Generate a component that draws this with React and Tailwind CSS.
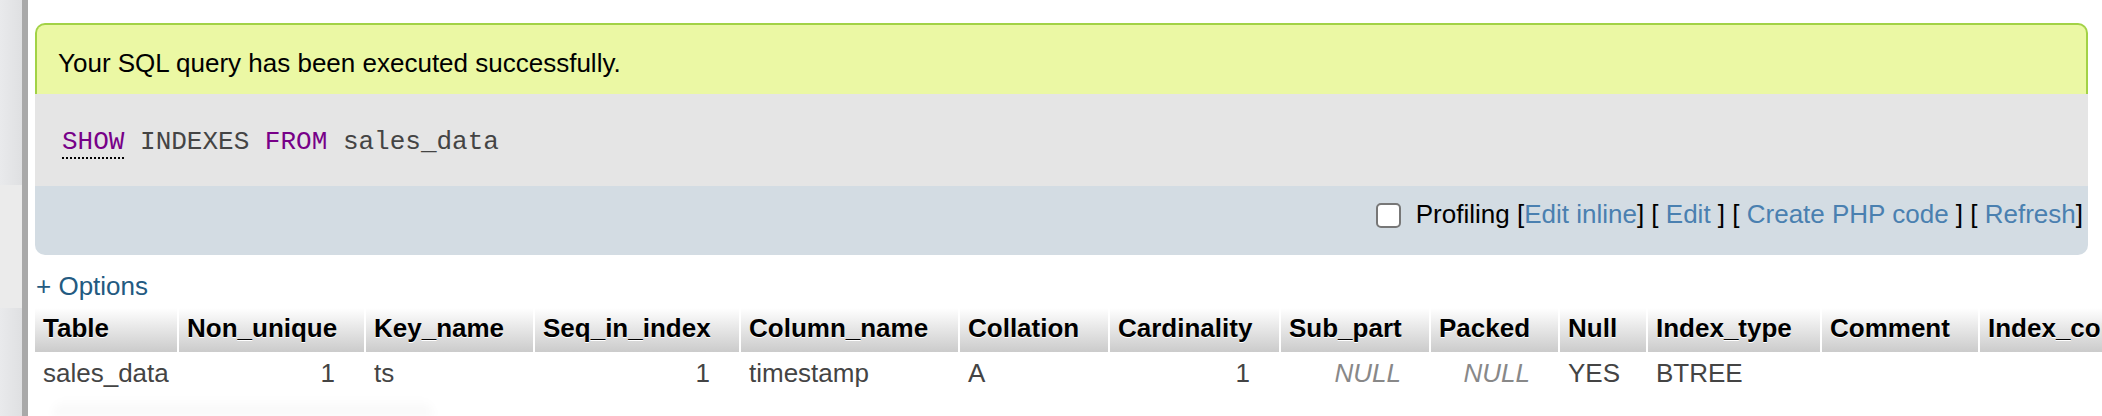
import React from "react";

const cols = [
  { name: "Table", w: "w-[144px]" },
  { name: "Non_unique", w: "w-[187px]" },
  { name: "Key_name", w: "w-[169px]" },
  { name: "Seq_in_index", w: "w-[206px]" },
  { name: "Column_name", w: "w-[219px]" },
  { name: "Collation", w: "w-[150px]" },
  { name: "Cardinality", w: "w-[171px]" },
  { name: "Sub_part", w: "w-[150px]" },
  { name: "Packed", w: "w-[129px]" },
  { name: "Null", w: "w-[88px]" },
  { name: "Index_type", w: "w-[174px]" },
  { name: "Comment", w: "w-[158px]" },
  { name: "Index_comment", w: "w-[240px]" },
];

const row = [
  { v: "sales_data", t: "l" },
  { v: "1", t: "r" },
  { v: "ts", t: "l" },
  { v: "1", t: "r" },
  { v: "timestamp", t: "l" },
  { v: "A", t: "l" },
  { v: "1", t: "r" },
  { v: "NULL", t: "n" },
  { v: "NULL", t: "n" },
  { v: "YES", t: "l" },
  { v: "BTREE", t: "l" },
  { v: "", t: "l" },
  { v: "", t: "l" },
];

function Link({ children }) {
  return <a className="text-[#4a80b0] no-underline">{children}</a>;
}

export default function App() {
  return (
    <div className="flex w-[2102px] h-[416px] overflow-hidden bg-white font-['Liberation_Sans',Arial,sans-serif] text-[26px] leading-[30px] text-black">
      {/* left navigation edge */}
      <div className="flex w-[28px] shrink-0">
        <div className="flex w-[22px] flex-col">
          <div className="h-[185px] bg-[linear-gradient(90deg,#e9eaec,#dfe0e2)]" />
          <div className="h-[123px] bg-[#ebebeb]" />
          <div className="flex-1 bg-[linear-gradient(90deg,#e9eaec,#dfe0e2)]" />
        </div>
        <div className="w-[6px] bg-[#a9a9a9]" />
      </div>

      <div className="relative flex-1 min-w-0 pl-[7px] pt-[23px]">
        <div className="w-[2053px]">
          <div className="rounded-t-[10px] border-2 border-b-0 border-[#a2d246] bg-[#ebf8a4] pl-[21px] pt-[23px] pb-[16px]">
            Your SQL query has been executed successfully.
          </div>
          <div className="bg-[#e5e5e5] pl-[27px] pt-[33px] pb-[29px] font-['Courier_New','Liberation_Mono',monospace] text-[#444] whitespace-pre">
            <span className="text-[#770088] border-b-2 border-dotted border-black">SHOW</span>
            {" INDEXES "}
            <span className="text-[#770088]">FROM</span>
            {" sales_data"}
          </div>
          <div className="flex items-center justify-end rounded-b-[10px] bg-[#d3dce3] pr-[5px] pt-[13px] pb-[26px] whitespace-pre">
            <span className="mt-[3px] mr-[15px] h-[25px] w-[25px] rounded-[5px] border-2 border-[#777] bg-white" />
            <span>
              {"Profiling ["}
              <Link>Edit inline</Link>
              {"] [ "}
              <Link>Edit</Link>
              {" ] [ "}
              <Link>Create PHP code</Link>
              {" ] [ "}
              <Link>Refresh</Link>
              {"]"}
            </span>
          </div>
        </div>

        <div className="mt-[16px] pl-[1px] text-[#235a81]">+ Options</div>

        <table className="mt-[7px] table-fixed w-[2185px] border-separate border-spacing-0">
          <colgroup>
            {cols.map((c) => (
              <col key={c.name} className={c.w} />
            ))}
          </colgroup>
          <thead>
            <tr>
              {cols.map((c) => (
                <th
                  key={c.name}
                  className="border-r-2 border-white bg-[linear-gradient(#ffffff,#cbcbcb)] pl-[8px] pr-[6px] pt-[5px] pb-[9px] text-left font-bold whitespace-nowrap overflow-hidden [text-shadow:0_1px_0_#fff]"
                >
                  {c.name}
                </th>
              ))}
            </tr>
          </thead>
          <tbody>
            <tr>
              {row.map((c, i) => (
                <td
                  key={i}
                  className={
                    c.t === "l"
                      ? "border-r-2 border-white pl-[8px] pr-[6px] pt-[6px] pb-[8px] text-left text-[#444] whitespace-nowrap"
                      : c.t === "r"
                      ? "border-r-2 border-white pl-[8px] pr-[29px] pt-[6px] pb-[8px] text-right text-[#444] whitespace-nowrap"
                      : "border-r-2 border-white pl-[8px] pr-[28px] pt-[6px] pb-[8px] text-right italic text-[#888] whitespace-nowrap"
                  }
                >
                  {c.v}
                </td>
              ))}
            </tr>
          </tbody>
        </table>

        <div className="absolute left-[25px] top-[398px] h-[18px] w-[380px] rounded-t-[30px] bg-[linear-gradient(rgba(0,0,0,0),rgba(0,0,0,0.035))] blur-[4px]" />
      </div>
    </div>
  );
}
